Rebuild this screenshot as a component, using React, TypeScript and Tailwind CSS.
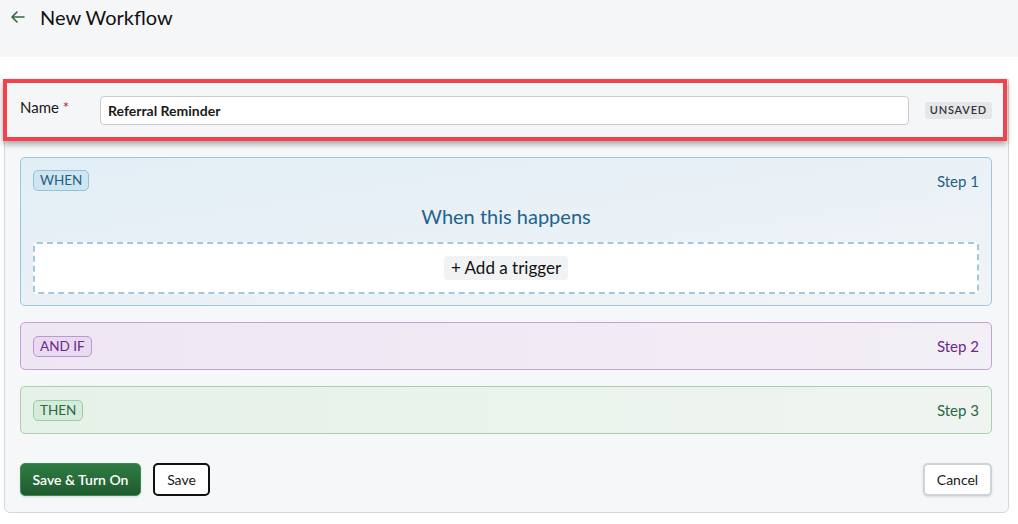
import React from "react";

type Step = {
  tag: string;
  step: string;
  box: string;
  badge: string;
  text: string;
};

const steps: Step[] = [
  {
    tag: "AND IF",
    step: "Step 2",
    box: "border-[#c3a3d4] bg-gradient-to-r from-[#efe6f4] to-[#f3eff6]",
    badge: "border-[#bb98cf] bg-[#e9d9f1]",
    text: "text-[#6a2a8c]",
  },
  {
    tag: "THEN",
    step: "Step 3",
    box: "border-[#a8cfae] bg-gradient-to-r from-[#e6f2e8] to-[#eff4f1]",
    badge: "border-[#9ec9a6] bg-[#d6ecdb]",
    text: "text-[#2b6844]",
  },
];

export default function App() {
  return (
    <div className="w-[1018px] h-[524px] bg-white text-[#1a1a1a] font-['Lato','Liberation_Sans',sans-serif] overflow-hidden">
      <header className="h-[57px] bg-[#f5f6f8] flex items-start pt-[4px] pl-[10px] gap-[14px]">
        <svg width="16" height="24" viewBox="0 0 16 24" className="mt-[1px]" fill="none" stroke="#2e6b3e" strokeWidth="1.6" strokeLinecap="round" strokeLinejoin="round">
          <path d="M14 12H2M7 7l-5 5 5 5" />
        </svg>
        <h1 className="text-[20px] leading-[26px] text-[#111]">New Workflow</h1>
      </header>

      <div className="ml-[4px] w-[1005px] mt-[22px] h-[434px] border border-[#d4d7dc] rounded-b-md bg-[#f6f7f9]">
        <div className="-ml-[2px] mr-[1px] -mt-px h-[62px] border-4 border-[#f2424b] bg-[#f5f6f8] shadow-[0_3px_6px_rgba(0,0,0,0.35)] flex items-center pl-[13px] pr-[11px] relative z-10">
          <label className="w-[80px] text-[15px] -mt-[6px]">
            Name <span className="text-[#b4232f]">*</span>
          </label>
          <div className="flex-1 h-[29px] bg-white border border-[#c9ccd1] rounded-[4px] flex items-center px-[7px] text-[14px] font-bold">
            Referral Reminder
          </div>
          <span className="ml-[16px] h-[17px] px-[5px] rounded-[3px] bg-[#e4e6ea] text-[11px] tracking-[0.8px] font-semibold text-[#333] flex items-center">
            UNSAVED
          </span>
        </div>

        <div className="pl-[15px] pr-[16px] pt-[16px] flex flex-col gap-[16px]">
          <section className="h-[149px] border border-[#9fc6d9] rounded-[5px] bg-gradient-to-br from-[#e2eef6] to-[#f1f4f7] px-[12px] pt-[12px]">
            <div className="flex items-start justify-between">
              <span className="h-[21px] px-[6px] rounded-[5px] border border-[#93c3d9] bg-[#cfe6f2] text-[13.5px] text-[#1f5f87] flex items-center">
                WHEN
              </span>
              <span className="text-[15px] text-[#1f5f87]">Step 1</span>
            </div>
            <h2 className="text-center text-[20px] leading-[26px] text-[#23628a] mt-[10px]">When this happens</h2>
            <div className="mt-[13px] h-[52px] bg-white border-2 border-dashed border-[#a2c8da] rounded-[4px] flex items-center justify-center">
              <button className="h-[24px] px-[7px] rounded-[4px] bg-[#f1f2f4] text-[17px] text-[#111] leading-none">
                + Add a trigger
              </button>
            </div>
          </section>

          {steps.map((s) => (
            <section key={s.tag} className={`h-[48px] border rounded-[5px] px-[12px] flex items-center justify-between ${s.box}`}>
              <span className={`h-[21px] px-[6px] rounded-[5px] border text-[13.5px] flex items-center ${s.badge} ${s.text}`}>
                {s.tag}
              </span>
              <span className={`text-[15px] ${s.text}`}>{s.step}</span>
            </section>
          ))}

          <div className="flex items-center mt-[13px] gap-[12px]">
            <button className="h-[33px] w-[121px] rounded-[5px] border border-[#3a8a50] bg-gradient-to-b from-[#2f7d43] to-[#1f5a2f] text-white text-[14px] font-semibold shadow-sm">
              Save &amp; Turn On
            </button>
            <button className="h-[33px] w-[57px] rounded-[5px] border-2 border-[#111] bg-white text-[14px]">
              Save
            </button>
            <button className="ml-auto h-[33px] w-[69px] rounded-[5px] border-2 border-[#cfd2d6] bg-white text-[14px] shadow-sm">
              Cancel
            </button>
          </div>
        </div>
      </div>
    </div>
  );
}
